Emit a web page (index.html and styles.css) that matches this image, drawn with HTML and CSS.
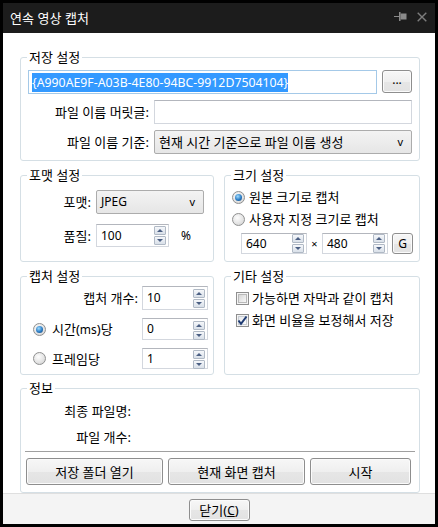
FILE: index.html
```html
<!DOCTYPE html>
<html lang="ko">
<head>
<meta charset="utf-8">
<title>연속 영상 캡처</title>
<link rel="stylesheet" href="styles.css">
</head>
<body>
<div class="window">
  <div class="titlebar">
    <span class="title">연속 영상 캡처</span>
    <div class="title-icons">
      <svg class="pin" width="13" height="9" viewBox="0 0 13 9">
        <rect x="0" y="4" width="5" height="1" fill="#8a8a8a"/>
        <rect x="5" y="0" width="1.5" height="9" fill="#8a8a8a"/>
        <rect x="6.5" y="1.5" width="6" height="6" fill="#8a8a8a"/>
      </svg>
      <svg class="close" width="10" height="10" viewBox="0 0 10 10">
        <path d="M0.7 0.7 L9.3 9.3 M9.3 0.7 L0.7 9.3" stroke="#7d7d7d" stroke-width="1.4" fill="none"/>
      </svg>
    </div>
  </div>

  <div class="body">
    <section class="group g-save">
      <span class="legend">저장 설정</span>
      <div class="path-row">
        <div class="textbox focused"><span class="sel">{A990AE9F-A03B-4E80-94BC-9912D7504104}</span></div>
        <button class="btn btn-browse">...</button>
      </div>
      <div class="form-grid">
        <label>파일 이름 머릿글:</label>
        <div class="textbox"></div>
        <label>파일 이름 기준:</label>
        <div class="combo"><span>현재 시간 기준으로 파일 이름 생성</span><span class="arrow">v</span></div>
      </div>
    </section>

    <div class="row row-mid">
      <section class="group g-format">
        <span class="legend">포맷 설정</span>
        <div class="fmt-grid">
          <label>포맷:</label>
          <div class="combo combo-fmt"><span class="latin">JPEG</span><span class="arrow">v</span></div>
          <label>품질:</label>
          <div class="quality">
            <div class="spinbox w73"><span>100</span><span class="spin"><i class="up"></i><i class="down"></i></span></div>
            <span class="pct">%</span>
          </div>
        </div>
      </section>

      <section class="group g-size">
        <span class="legend">크기 설정</span>
        <div class="opt"><span class="radio checked"></span><span>원본 크기로 캡처</span></div>
        <div class="opt"><span class="radio"></span><span>사용자 지정 크기로 캡처</span></div>
        <div class="size-row">
          <div class="spinbox w66 h21"><span>640</span><span class="spin"><i class="up"></i><i class="down"></i></span></div>
          <span class="times">×</span>
          <div class="spinbox w66 h21"><span>480</span><span class="spin"><i class="up"></i><i class="down"></i></span></div>
          <button class="btn btn-g">G</button>
        </div>
      </section>
    </div>

    <div class="row row-low">
      <section class="group g-capture">
        <span class="legend">캡처 설정</span>
        <div class="cap-grid">
          <label class="right">캡처 개수:</label>
          <div class="spinbox"><span>10</span><span class="spin"><i class="up"></i><i class="down"></i></span></div>
          <div class="opt"><span class="radio checked"></span><span>시간(<span class="latin">ms</span>)당</span></div>
          <div class="spinbox top"><span>0</span><span class="spin"><i class="up"></i><i class="down"></i></span></div>
          <div class="opt"><span class="radio"></span><span>프레임당</span></div>
          <div class="spinbox top"><span>1</span><span class="spin"><i class="up"></i><i class="down"></i></span></div>
        </div>
      </section>

      <section class="group g-etc">
        <span class="legend">기타 설정</span>
        <div class="opt"><span class="check"></span><span>가능하면 자막과 같이 캡처</span></div>
        <div class="opt"><span class="check checked"><svg width="11" height="11" viewBox="0 0 11 11"><path d="M1.5 5.5 L4 8.8 L9.5 1.5" stroke="#1f3b73" stroke-width="2" fill="none"/></svg></span><span>화면 비율을 보정해서 저장</span></div>
      </section>
    </div>

    <section class="group g-info">
      <span class="legend">정보</span>
      <div class="info-grid">
        <label>최종 파일명:</label><span></span>
        <label>파일 개수:</label><span></span>
      </div>
      <div class="sep"></div>
      <div class="actions">
        <button class="btn act1">저장 폴더 열기</button>
        <button class="btn act2">현재 화면 캡처</button>
        <button class="btn act3">시작</button>
      </div>
    </section>
  </div>

  <div class="footer">
    <button class="btn btn-close">닫기(<u class="latin">C</u>)</button>
  </div>
</div>
</body>
</html>
```

FILE: styles.css
```css
* { box-sizing: border-box; }
html, body { margin: 0; padding: 0; }
body {
  background: #000;
  font-family: "Noto Sans", "Noto Sans CJK KR", sans-serif;
  font-size: 13px;
  line-height: 16px;
  color: #000;
}
.latin { font-size: 12px; }
.window {
  width: 438px;
  height: 527px;
  padding: 3px 3px 4px 3px;
  background: #000;
  display: flex;
  flex-direction: column;
}
.titlebar {
  height: 30px;
  flex: none;
  background: #1c1c1c;
  display: flex;
  align-items: center;
  padding-left: 7px;
  color: #fff;
}
.title { font-size: 13px; font-family: "Noto Sans CJK KR", sans-serif; }
.title-icons {
  margin-left: auto;
  margin-right: 8px;
  margin-top: -3px;
  display: flex;
  align-items: center;
  gap: 10px;
}
.title-icons svg { display: block; }

.body {
  flex: 1;
  background: #fff;
  padding: 12px 15px 0 17px;
  display: flex;
  flex-direction: column;
}
.footer {
  height: 31px;
  flex: none;
  background: #f4f4f4;
  border-top: 1px solid #dfdfdf;
  display: flex;
  justify-content: center;
  align-items: flex-start;
  padding-top: 5px;
}

.group {
  position: relative;
  border: 1px solid #d5dfe5;
  border-radius: 3px;
}
.legend {
  position: absolute;
  top: -9px;
  left: 6px;
  padding: 0 2px;
  background: #fff;
  line-height: 16px;
}
label { white-space: nowrap; }

/* controls */
.textbox {
  border: 1px solid #d3d7de;
  border-top-color: #b3b6bd;
  background: #fff;
  display: flex;
  align-items: center;
  padding: 0 3px;
  height: 24px;
}
.textbox.focused { border-color: #a4c9e8; }
.sel {
  display: inline-block;
  background: #3399ff;
  color: #fff;
  font-size: 12.3px;
  line-height: 19px;
  white-space: nowrap;
}
.combo {
  border: 1px solid #acacac;
  border-radius: 2px;
  background: linear-gradient(#f3f3f3, #e6e6e6);
  display: flex;
  align-items: center;
  padding: 0 8px 0 4px;
  height: 24px;
  white-space: nowrap;
}
.combo .arrow { margin-left: auto; font-size: 11px; }
.btn {
  font: inherit;
  color: #000;
  border: 1px solid #8e8e8e;
  border-radius: 3px;
  background: linear-gradient(#f7f7f7 0%, #efefef 50%, #e6e6e6 51%, #e2e2e2 100%);
  box-shadow: inset 0 0 0 1px #fbfbfb;
  padding: 0;
  margin: 0;
  cursor: default;
}
.spinbox {
  border: 1px solid #d3d7de;
  border-top-color: #b3b6bd;
  background: #fff;
  display: flex;
  align-items: center;
  padding: 0 2px 0 4px;
  height: 24px;
  font-size: 12px;
}
.spinbox.top { align-items: flex-start; padding-top: 2px; }
.spinbox.w73 { width: 73px; height: 23px; }
.spinbox.w66 { width: 66px; }
.spinbox.h21 { height: 21px; }
.spin {
  margin-left: auto;
  display: flex;
  flex-direction: column;
  gap: 1px;
  align-self: center;
}
.spin i {
  display: block;
  position: relative;
  width: 12px;
  height: 9px;
  border: 1px solid #b0b9c5;
  border-radius: 1px;
  background: linear-gradient(#f5f7fa, #d9e0e9);
}
.spin i::after {
  content: "";
  position: absolute;
  left: 2px;
  top: 2px;
  width: 0;
  height: 0;
  border-left: 3px solid transparent;
  border-right: 3px solid transparent;
}
.spin i.up::after { border-bottom: 3px solid #4b5f83; }
.spin i.down::after { border-top: 3px solid #4b5f83; }

.radio {
  flex: none;
  position: relative;
  width: 13px;
  height: 13px;
  border-radius: 50%;
  border: 1px solid #8f9090;
  background: radial-gradient(circle at 40% 35%, #fdfdfd 0%, #e2e2e2 60%, #c9c9c9 100%);
}
.radio.checked::after {
  content: "";
  position: absolute;
  left: 2px;
  top: 2px;
  width: 7px;
  height: 7px;
  border-radius: 50%;
  background: radial-gradient(circle at 40% 35%, #9fdcff 0%, #2b7cc4 55%, #153f6f 100%);
}
.check {
  flex: none;
  position: relative;
  width: 13px;
  height: 13px;
  border: 1px solid #8f8f8f;
  background: #f4f4f4;
}
.check::before {
  content: "";
  position: absolute;
  inset: 1px;
  border: 1px solid #b9b9b9;
  background: linear-gradient(135deg, #d6d6d6, #f8f8f8);
}
.check.checked::before {
  border-color: #c8cdd3;
  background: linear-gradient(135deg, #e6e9ed, #fcfcfc);
}
.check svg { position: absolute; left: 0; top: 0; }

.opt {
  display: flex;
  align-items: center;
  height: 22px;
  white-space: nowrap;
}

/* save group */
.g-save {
  height: 104px;
  margin-top: 12px;
  padding: 12px 7px 0 7px;
}
.path-row {
  display: flex;
  gap: 5px;
  align-items: flex-start;
}
.path-row .textbox { flex: 1; }
.btn-browse { width: 30px; height: 23px; line-height: 14px; padding-bottom: 4px; font-size: 12px; }
.form-grid {
  display: grid;
  grid-template-columns: 1fr 258px;
  grid-auto-rows: 24px;
  column-gap: 5px;
  row-gap: 6px;
  margin-top: 6px;
  align-items: center;
}
.form-grid label { text-align: right; }

/* rows */
.row {
  display: grid;
  grid-template-columns: 194px 196px;
  column-gap: 10px;
  margin-top: 14px;
}
.row-mid { height: 87px; }
.row-low { height: 99px; }

.g-format { padding: 14px 0 0 7px; }
.fmt-grid {
  display: grid;
  grid-template-columns: 63px auto;
  grid-template-rows: 24px 23px;
  column-gap: 5px;
  row-gap: 10px;
  align-items: center;
}
.fmt-grid label { text-align: right; }
.combo-fmt { width: 108px; }
.quality { display: flex; align-items: center; }
.pct { margin-left: 12px; font-size: 12px; }

.g-size { padding: 10px 0 0 7px; }
.g-size .opt .radio { margin-right: 4px; }
.size-row {
  display: flex;
  align-items: center;
  margin-top: 3px;
  margin-left: 9px;
}
.times { width: 15px; text-align: center; font-size: 11px; }
.btn-g { width: 21px; height: 21px; margin-left: 4px; font-size: 12px; }

.g-capture { padding: 9px 5px 0 12px; }
.cap-grid {
  display: grid;
  grid-template-columns: 1fr 66px;
  grid-template-rows: 24px 22px 21px;
  column-gap: 4px;
  row-gap: 8px;
  align-items: center;
}
.cap-grid .right { text-align: right; }
.cap-grid .spinbox { height: 100%; }
.cap-grid .opt .radio { margin-right: 6px; }

.g-etc { padding: 10px 0 0 11px; }
.g-etc .opt .check { margin-right: 3px; }

.g-info {
  height: 105px;
  margin-top: 13px;
  padding: 11px 4px 0 4px;
}
.info-grid {
  display: grid;
  grid-template-columns: 106px 1fr;
  grid-auto-rows: 22px;
  row-gap: 4px;
  align-items: center;
}
.info-grid label { text-align: right; }
.sep { height: 1px; background: #a0a0a0; margin-top: 3px; }
.actions {
  display: flex;
  gap: 5px;
  margin-top: 6px;
  padding-left: 1px;
}
.actions .btn { height: 27px; }
.act1, .act2 { width: 137px; }
.act3 { width: 101px; }

.btn-close { width: 61px; height: 22px; }
.btn-close u { text-decoration: underline; }
```
